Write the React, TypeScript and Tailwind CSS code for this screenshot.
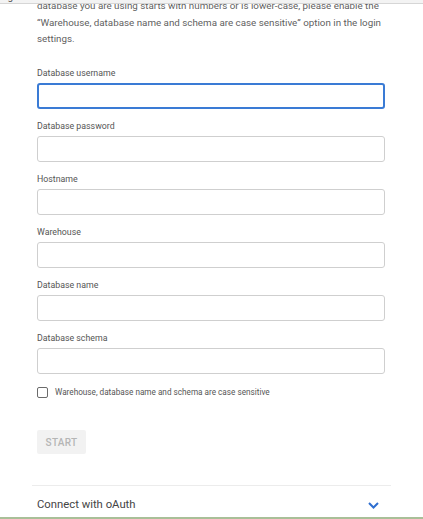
import { useState } from 'react'

const fields = [
  { label: 'Database username', focused: true },
  { label: 'Database password' },
  { label: 'Hostname' },
  { label: 'Warehouse' },
  { label: 'Database name' },
  { label: 'Database schema' },
]

export default function App() {
  const [checked, setChecked] = useState(false)

  return (
    <div className="relative h-[519px] w-[423px] overflow-hidden bg-white font-['Roboto','Liberation_Sans',sans-serif]">
      {/* header strip scrolled over the content */}
      <div className="absolute inset-x-0 top-0 z-10 h-[4px] overflow-hidden border-b border-[#d6d6d6] bg-[#f3f3f3]">
        <p className="-mt-[9px] pl-[2px] text-[10px] leading-[12px] text-[#555]">
          ngs or Users - The Who is outside wb
        </p>
      </div>

      <div className="flex flex-col">
        <div className="flex flex-col px-[37px]">
          <p className="-mt-[2px] text-[9.8px] leading-[16.5px] text-[#5f5f5f]">
            database you are using starts with numbers or is lower-case, please enable the
            <br />
            “Warehouse, database name and schema are case sensitive” option in the login
            <br />
            settings.
          </p>

          <div className="mt-[19.5px] flex flex-col gap-[11px]">
            {fields.map((f) => (
              <label key={f.label} className="flex flex-col">
                <span className="text-[8.8px] leading-[12px] text-[#555]">{f.label}</span>
                <input
                  type="text"
                  className={
                    f.focused
                      ? 'mt-[4px] h-[26px] w-[348px] rounded-[3px] border-2 border-[#3a7bd5] outline-none'
                      : 'mt-[4px] h-[26px] w-[348px] rounded-[3px] border border-[#cfcfcf] outline-none'
                  }
                />
              </label>
            ))}
          </div>

          <label className="mt-[12px] flex h-[12px] items-center gap-[7px]">
            <button
              type="button"
              onClick={() => setChecked(!checked)}
              className="h-[11px] w-[11px] rounded-[2px] border border-[#6b6b6b] bg-white"
            />
            <span className="text-[8.2px] leading-[12px] text-[#555]">
              Warehouse, database name and schema are case sensitive
            </span>
          </label>

          <button
            type="button"
            disabled
            className="mt-[32px] flex h-[24px] w-[49px] items-center justify-center rounded-[2px] bg-[#f2f2f2] text-[10px] font-medium tracking-[0.3px] text-[#b5b5b5]"
          >
            START
          </button>
        </div>

        <div className="mx-[32px] mt-[31px] border-t border-[#ececec]" />
        <div className="flex h-[31px] items-center justify-between pl-[37px] pr-[44px] pt-[7px]">
          <span className="text-[11.3px] leading-[14px] text-[#444]">Connect with oAuth</span>
          <svg width="11" height="7" viewBox="0 0 11 7" fill="none">
            <path d="M1 1l4.5 4.5L10 1" stroke="#2f6fd0" strokeWidth="2" />
          </svg>
        </div>
        <div className="h-[2px] bg-[#a9bf98]" />
      </div>
    </div>
  )
}
